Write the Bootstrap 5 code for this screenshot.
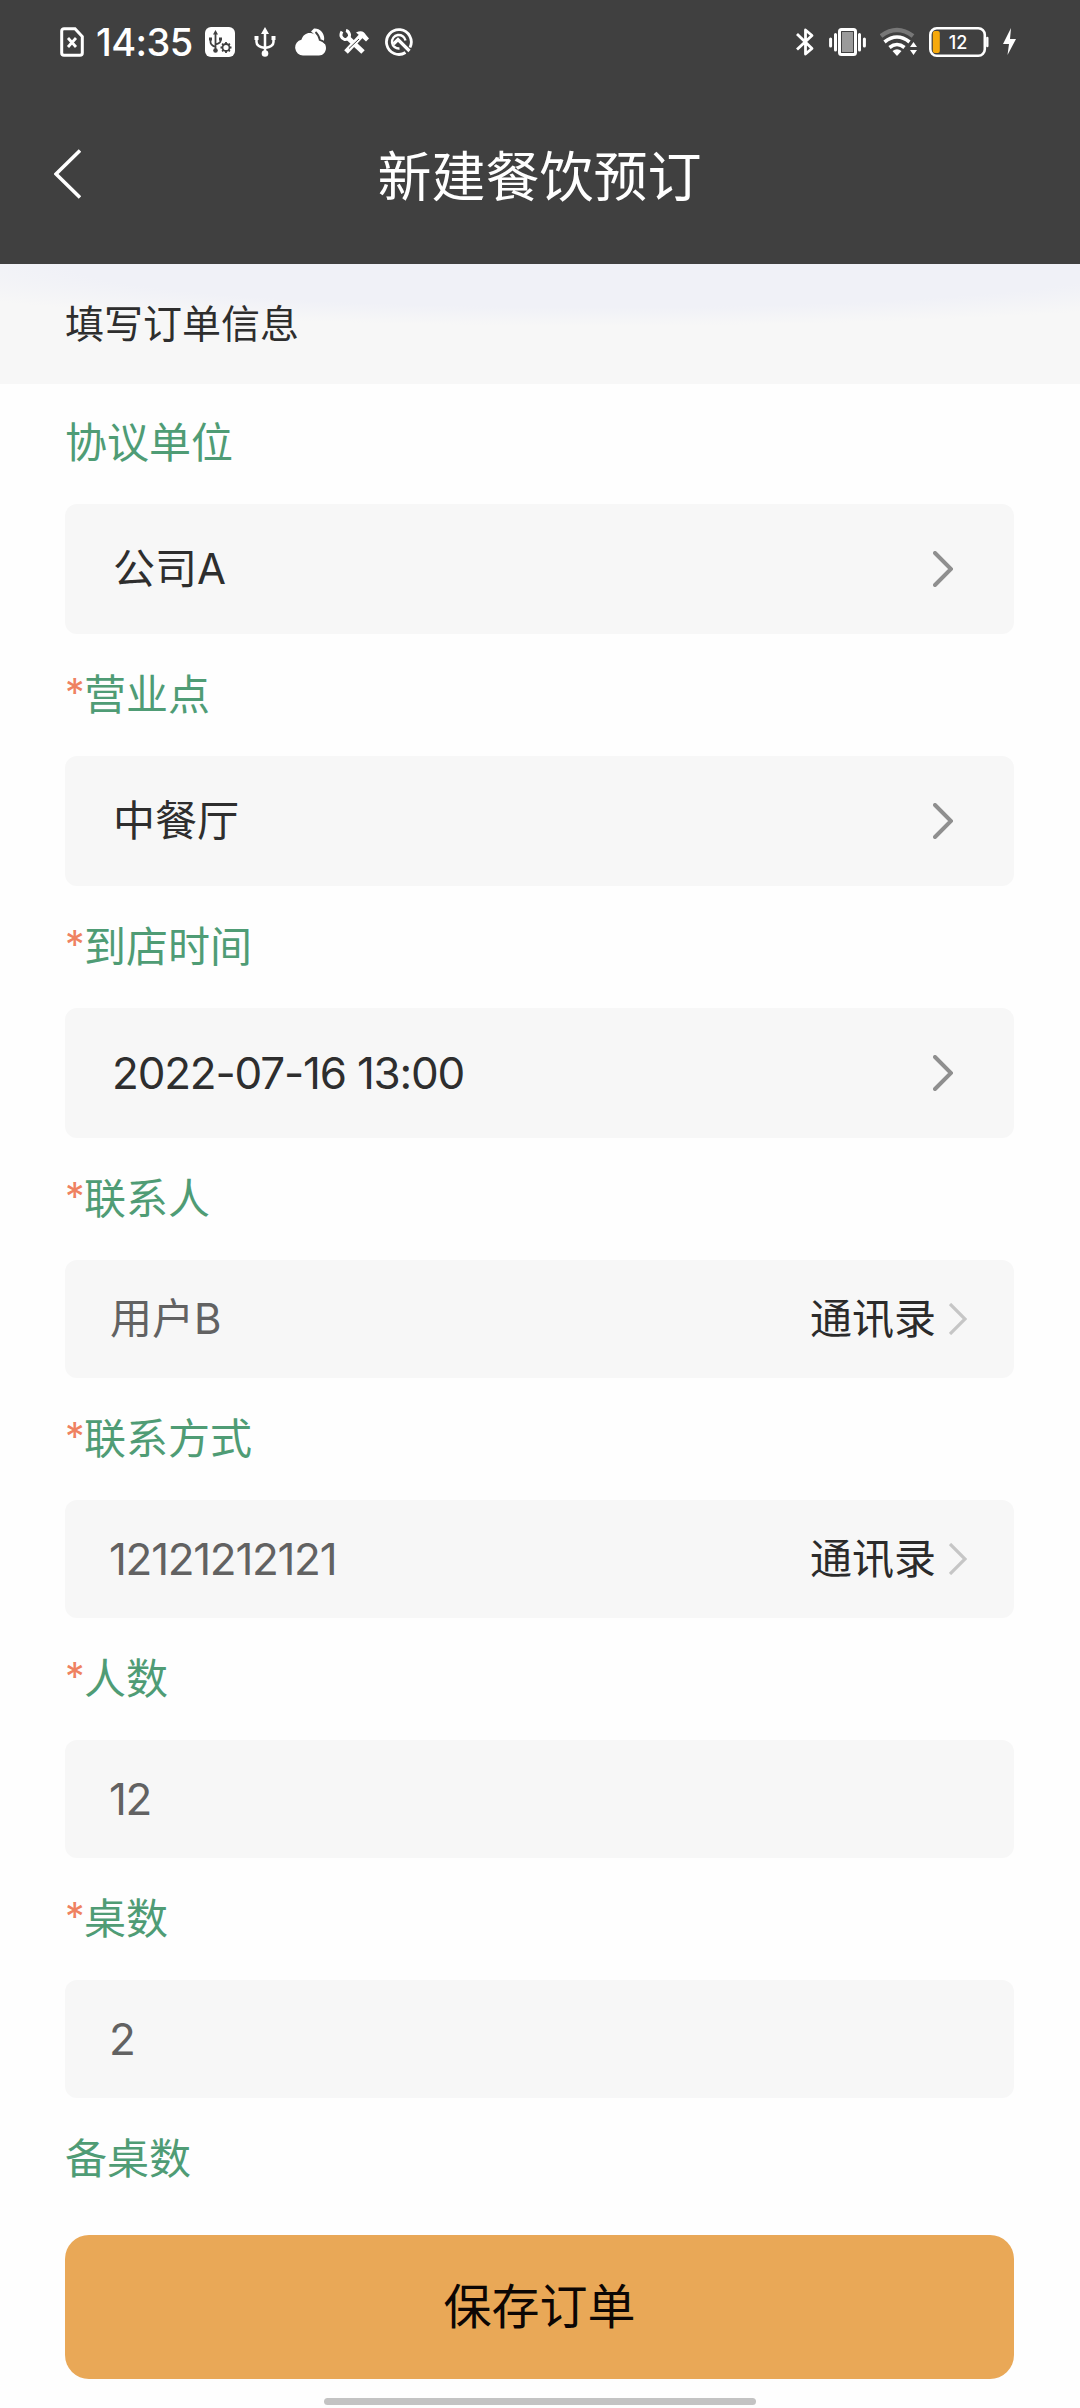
<!DOCTYPE html>
<html lang="zh-CN">
<head>
<meta charset="utf-8">
<meta name="viewport" content="width=device-width, initial-scale=1">
<title>新建餐饮预订</title>
<link href="https://cdn.jsdelivr.net/npm/bootstrap@5.3.0/dist/css/bootstrap.min.css" rel="stylesheet">
<style>
body{font-family:Inter,"Noto Sans CJK SC",sans-serif;font-size:42px;line-height:1;color:#2e2e2e;background:#fefefe}
svg{display:block;flex:none}
.screen{width:1080px;height:2408px;overflow:hidden}
.topbar{background:#404040;color:#fff;height:264px}
.status{height:84px;padding:0 63px 0 60px}
.clock{font-size:38px;font-weight:500;width:95px;letter-spacing:-.6px;margin:0 14px 0 12px;white-space:nowrap}
.navrow{height:180px;padding:0 55px 0 54px;display:grid;grid-template-columns:27px 1fr 27px}
.navrow svg{margin-top:65px}
.navrow h1{font-size:54px;line-height:60px;margin:64px 0 0;font-weight:400}
.section-band{height:120px;padding:0 65px 2px;font-size:39px;background:radial-gradient(ellipse 760px 62px at 600px 0,#f0f1f7 70%,#f7f7f7 100%) #f7f7f7}
.booking{padding:0 66px 0 65px}
.field-label{height:120px;padding-bottom:2px;color:#4f9c75;font-weight:400}
.req{color:#ef8261;width:19px;font-size:39px;margin-top:-5px}
.field-box{height:130px;margin-bottom:2px;background:#f7f7f7;border-radius:12px;padding:0 61px 0 48px}
.entry{height:118px;margin-bottom:2px;padding:0 47px 0 45px;color:#626262}
.num{font-size:44px;letter-spacing:-1.3px;margin-left:-1px}
.date-num{letter-spacing:-1.2px}
.link-text{color:#2b2b2b;margin-right:13px}
.save-btn{height:144px;border-radius:24px;background:#e9a857;color:#0c0604;font-size:48px;line-height:1;border:0;margin-top:15px;--bs-btn-hover-bg:#e9a857}
.homebar{width:432px;height:7px;border-radius:4px;background:#c3c3c3;margin:19px auto 0}
</style>
<script src="https://cdn.jsdelivr.net/npm/bootstrap@5.3.0/dist/js/bootstrap.bundle.min.js"></script>
</head>
<body>
<svg width="0" height="0" class="position-absolute">
  <symbol id="chev" viewBox="0 0 20 36"><path d="M2 2L18 18L2 34" fill="none" stroke="#8f8f8f" stroke-width="4" stroke-linecap="round"/></symbol>
  <symbol id="chev-s" viewBox="0 0 18 32"><path d="M1 1L16 16L1 31" fill="none" stroke="#c6c6c6" stroke-width="3.2"/></symbol>
</svg>
<div class="screen">
  <header class="topbar">
    <div class="status d-flex align-items-center">
      <svg width="24" height="30" fill="none" stroke="#fff"><path d="M4 1.7H15L22.3 9.500V26a2.300 2.300 0 0 1-2.300 2.300H4A2.300 2.300 0 0 1 1.700 26V4A2.300 2.300 0 0 1 4 1.700Z" stroke-width="3"/><path d="M8 11L16 20M16 11L8 20" stroke-width="2.800"/></svg>
      <span class="clock">14:35</span>
      <svg width="30" height="30"><rect width="30" height="30" rx="6" fill="#fff"/><g stroke="#404040" fill="none" stroke-width="1.800"><path d="M10.500 6V24M5.500 12V15Q5.500 18 10.500 20M15.500 11V14Q15.500 16 10.500 17.500"/><circle cx="21" cy="20.500" r="3.500"/><path d="M21 15v2M21 24v2M15.500 20.500h2M24.500 20.500h2M17.100 16.600l1.400 1.400M23.500 23l1.400 1.400M17.100 24.400l1.400-1.400M23.500 18l1.400-1.400"/></g><path d="M10.500 3L13 7.500H8ZM4 10.500h3v3H4ZM14 10.500h3v3H14Z" fill="#404040"/><circle cx="10.500" cy="23.500" r="2.300" fill="#404040"/></svg>
      <svg width="24" height="30" style="margin-left:18px" fill="none" stroke="#fff" stroke-width="2.500"><path d="M12 5V26M3.500 12V15Q3.500 19.500 12 21M20.500 12V15Q20.500 19.500 12 21"/><path d="M12 0L16 7H8ZM1.500 9h4v4h-4ZM18.500 9h4v4h-4Z" fill="#fff" stroke="none"/><circle cx="12" cy="26.500" r="3.300" fill="#fff" stroke="none"/></svg>
      <svg width="31" height="30" style="margin-left:18px" fill="#fff"><path d="M19 1.500C27 1 32 10 27.500 17L22 14Q20 7 16 4.500Z"/><path d="M8 28.500a8 8 0 0 1-1.600-15.800C8 7.500 12 5.500 15.500 6c4 .5 6.700 3 7.500 7 5.500.500 8 4 8 8 0 4-3 7.500-7 7.500Z"/><path d="M20.500 5Q24.500 9 24.700 12.800Q28 13.500 30.500 16.500" fill="none" stroke="#404040" stroke-width="1.800"/></svg>
      <svg width="32" height="30" style="margin-left:13px" fill="none" stroke="#fff"><path d="M8 10L24 25" stroke-width="5"/><path d="M7 25L22 9" stroke-width="5"/><path d="M3 4.500Q0 10 5.500 12.500Q11 13 10.500 7.500Q9.500 4 7 3.500" stroke-width="3"/><path d="M17 5.500Q24 2 27 8L30 11.500L27 14.500L20 8Z" fill="#fff" stroke="none"/><path d="M10 21.500L20 12" stroke="#404040" stroke-width="1"/></svg>
      <svg width="28" height="30" style="margin-left:14px" fill="none" stroke="#fff" stroke-width="2.800"><path d="M20.500 25.500A12.400 12.400 0 1 1 25 20.500"/><path d="M14.500 21.500A6.800 6.800 0 1 1 20.500 13.500" stroke-width="2.400"/><path d="M8.500 17L13 12.500L24.500 24" stroke-width="3.200"/></svg>

      <svg class="ms-auto" width="18" height="30" fill="none" stroke="#fff" stroke-width="2.800"><path d="M1 7L16 21.500L9.500 27V3L16 8.500L1 22.500" stroke-linejoin="round"/></svg>
      <svg width="37" height="30" style="margin-left:15px" fill="none" stroke="#fff"><rect x="10.500" y="2.500" width="16" height="25" rx="2" stroke-width="3"/><rect x="13" y="5" width="11" height="20" fill="#9a9a9a" stroke="none"/><path d="M6.500 7.500V23M30.500 7.500V23" stroke-width="3" stroke-linecap="round"/><path d="M1.600 12V19M35.400 12V19" stroke-width="3" stroke-linecap="round"/></svg>
      <svg width="38" height="30" style="margin-left:14px" fill="none" stroke="#fff" stroke-width="3.600"><path d="M1 9Q17-3 33 9" stroke="#777" stroke-width="4.500"/><path d="M4.500 15Q17 5 29.500 15"/><path d="M9.500 20.500Q17 14.500 24.500 20.500"/><path d="M12.500 24Q17 20.500 21.500 24L17 29Z" fill="#fff" stroke="none"/><path d="M30 20L33.500 15L37 20ZM30 23H37L33.500 28Z" fill="#fff" stroke="none"/></svg>
      <svg width="60" height="30" style="margin-left:11px"><rect x="1.300" y="1.300" width="54.500" height="27.400" rx="6.500" fill="none" stroke="#fff" stroke-width="2.600"/><rect x="3.800" y="4" width="7" height="22" rx="2" fill="#f6a90c"/><path d="M58.300 11V19" stroke="#fff" stroke-width="2.400" stroke-linecap="round"/><text x="29" y="21.500" text-anchor="middle" fill="#fff" font-size="18" font-weight="500" font-family="Inter,sans-serif">12</text></svg>
      <svg width="15" height="30" style="margin-left:13px"><path d="M9 1L1 17H7L5.500 28L14 12H8Z" fill="#fff"/></svg>
    </div>
    <nav class="navrow">
      <svg width="27" height="50" fill="none" stroke="#fff" stroke-width="3.600"><path d="M26 1.500L2 25L26 48.500"/></svg>
      <h1 class="text-center">新建餐饮预订</h1>
    </nav>
  </header>
  <div class="section-band d-flex align-items-center">填写订单信息</div>
  <main class="booking">
    <div class="field-label d-flex align-items-center">协议单位</div>
    <div class="field-box d-flex align-items-center justify-content-between"><span>公司A</span><svg width="20" height="36"><use href="#chev"/></svg></div>
    <div class="field-label d-flex align-items-center"><span class="req">*</span>营业点</div>
    <div class="field-box d-flex align-items-center justify-content-between"><span>中餐厅</span><svg width="20" height="36"><use href="#chev"/></svg></div>
    <div class="field-label d-flex align-items-center"><span class="req">*</span>到店时间</div>
    <div class="field-box d-flex align-items-center justify-content-between"><span class="num date-num">2022-07-16 13:00</span><svg width="20" height="36"><use href="#chev"/></svg></div>
    <div class="field-label d-flex align-items-center"><span class="req">*</span>联系人</div>
    <div class="field-box entry d-flex align-items-center"><span class="me-auto">用户B</span><span class="link-text">通讯录</span><svg width="18" height="32"><use href="#chev-s"/></svg></div>
    <div class="field-label d-flex align-items-center"><span class="req">*</span>联系方式</div>
    <div class="field-box entry d-flex align-items-center"><span class="num me-auto">12121212121</span><span class="link-text">通讯录</span><svg width="18" height="32"><use href="#chev-s"/></svg></div>
    <div class="field-label d-flex align-items-center"><span class="req">*</span>人数</div>
    <div class="field-box entry d-flex align-items-center"><span class="num">12</span></div>
    <div class="field-label d-flex align-items-center"><span class="req">*</span>桌数</div>
    <div class="field-box entry d-flex align-items-center"><span class="num">2</span></div>
    <div class="field-label d-flex align-items-center">备桌数</div>
    <button type="button" class="btn save-btn w-100">保存订单</button>
  </main>
  <div class="homebar"></div>
</div>
</body>
</html>
